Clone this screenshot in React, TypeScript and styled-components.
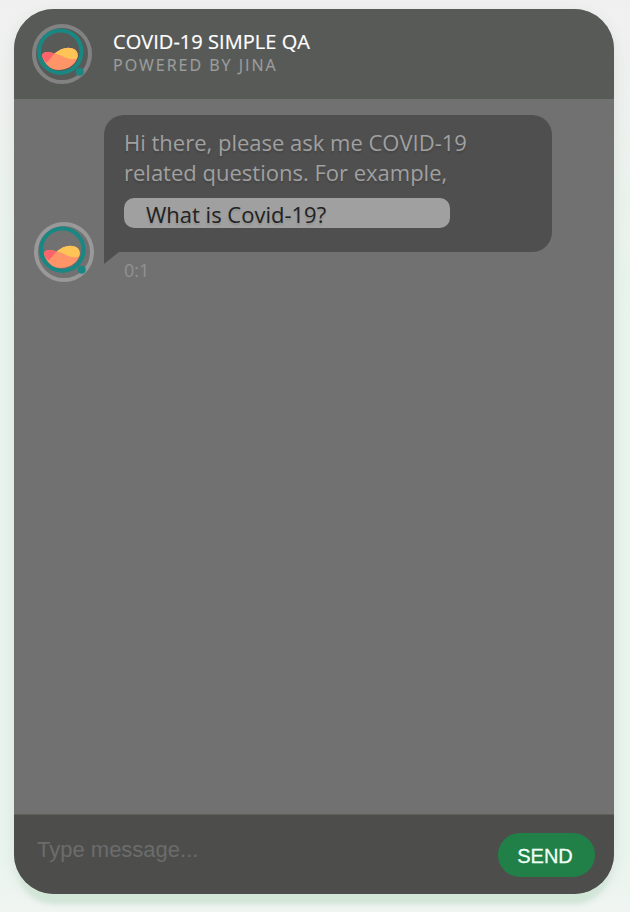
import React from "react";
import styled, { createGlobalStyle } from "styled-components";

const GlobalStyle = createGlobalStyle`
  * { box-sizing: border-box; }
  body {
    margin: 0;
    font-family: "Open Sans", "Noto Sans", sans-serif;
    background: linear-gradient(180deg, #f0f0f0 0, #eef1ef 100px, #e8f4ed 320px, #e8f4ed 840px, #f0f5f2 912px);
    overflow: hidden;
  }
`;

const Page = styled.main`
  width: 630px;
  height: 912px;
  padding: 9px 16px 18px 14px;
  overflow: hidden;
`;

const Chat = styled.section`
  display: flex;
  flex-direction: column;
  width: 600px;
  height: 885px;
  border-radius: 40px;
  overflow: hidden;
  background: #717171;
  box-shadow: 0 14px 4px -4px #d2e6d8, 0 4px 14px rgba(60, 80, 70, 0.1);
`;

const Header = styled.header`
  display: flex;
  flex: 0 0 90px;
  padding: 15px 18px;
  background: #585a58;
`;

const Ring = styled.div<{ $tone: string }>`
  flex: none;
  width: 60px;
  height: 60px;
  border: 4px solid ${(p) => p.$tone};
  border-radius: 50%;
  svg { display: block; }
`;

const Heading = styled.div`
  margin-left: 21px;
  padding-top: 4px;
`;

const Title = styled.h1`
  margin: 0;
  color: #fff;
  font-size: 20px;
  font-weight: 400;
  line-height: 27px;
  letter-spacing: 0.04px;
  white-space: nowrap;
  -webkit-text-stroke: 0.2px currentColor;
`;

const Subtitle = styled.h2`
  margin: 0;
  color: #9c9d9c;
  font-size: 16px;
  font-weight: 400;
  line-height: 20px;
  letter-spacing: 2px;
  white-space: nowrap;
  -webkit-text-stroke: 0.2px currentColor;
`;

const Messages = styled.div`
  display: flex;
  flex: 1;
  align-items: flex-start;
  padding: 16px 20px;
`;

const AvatarSlot = styled.div`
  padding-top: 107px;
`;

const MessageColumn = styled.div`
  margin-left: 10px;
`;

const Bubble = styled.div`
  position: relative;
  width: 448px;
  height: 137px;
  padding: 12px 20px;
  border-radius: 20px 20px 20px 0;
  background: #4f4f4f;
  color: #a0a0a0;
  font-size: 22px;
  line-height: 30px;
  text-shadow: 0 2px 2px rgba(0, 0, 0, 0.15);

  &::after {
    content: "";
    position: absolute;
    left: 0;
    top: 100%;
    border-top: 12px solid #4f4f4f;
    border-right: 15px solid transparent;
  }
`;

const Line = styled.div`
  white-space: nowrap;
`;

const Suggestion = styled.button`
  display: block;
  width: 326px;
  height: 30px;
  margin: 11px 0 0;
  padding: 1px 22px 0;
  border: 0;
  border-radius: 10px;
  background: #a0a0a0;
  color: #222;
  font: inherit;
  font-size: 22px;
  line-height: 30px;
  text-align: left;
  text-shadow: 0 2px 2px rgba(0, 0, 0, 0.12);
`;

const Time = styled.time`
  display: block;
  margin: 6px 0 0 20px;
  color: #929292;
  font-size: 18px;
  line-height: 24px;
`;

const Composer = styled.form`
  display: flex;
  flex: 0 0 80px;
  align-items: flex-start;
  justify-content: space-between;
  padding: 18px 19px 0 23px;
  border-top: 1px solid #5f6056;
  background: #4d4e4c;
`;

const MessageInput = styled.input`
  width: 400px;
  height: 34px;
  padding: 0;
  border: 0;
  outline: 0;
  background: transparent;
  color: #aaa;
  font: 22px "Liberation Sans", Arial, sans-serif;
  &::placeholder { color: #6b6c6b; opacity: 1; }
`;

const SendButton = styled.button`
  width: 97px;
  height: 44px;
  padding: 3px 3px 0 0;
  border: 0;
  border-radius: 22px;
  background: #218047;
  color: #f0fff5;
  font: 20px "Liberation Sans", Arial, sans-serif;
  text-align: center;
  -webkit-text-stroke: 0.3px currentColor;
`;

function BotAvatar({ tone }: { tone: string }) {
  return (
    <Ring $tone={tone}>
      <svg width="52" height="52" viewBox="0 0 52 52" aria-hidden="true">
        <circle cx="24.3" cy="23.7" r="21.2" fill="none" stroke="#1a8783" strokeWidth="4" />
        <circle cx="43.7" cy="43.8" r="4" fill="#1a8783" />
        <path d="M6 28C6 23.500 13 22.800 18.500 25.500C24 21 30 18.500 36 20.200C41 21.500 43 26 41 31C38 38 30 42 23 42C14 42 8.500 36 6 28Z" fill="#ff9468" />
        <path d="M6 28C6 23.500 13 22.800 18.500 25.500C16.500 27.500 14.500 31 10.500 34.500C8.500 32.500 7 30.500 6 28Z" fill="#fc646b" />
        <path d="M18.500 25.500C24 21 30 18.500 36 20.200C41 21.500 43 26 41 30.500C32 33.500 27 26.500 18.500 25.500Z" fill="#ffc456" />
      </svg>
    </Ring>
  );
}

export default function App() {
  return (
    <>
      <GlobalStyle />
      <Page>
        <Chat>
          <Header>
            <BotAvatar tone="#828282" />
            <Heading>
              <Title>COVID-19 SIMPLE QA</Title>
              <Subtitle>POWERED BY JINA</Subtitle>
            </Heading>
          </Header>
          <Messages>
            <AvatarSlot><BotAvatar tone="#999" /></AvatarSlot>
            <MessageColumn>
              <Bubble>
                <Line>Hi there, please ask me COVID-19</Line>
                <Line>related questions. For example,</Line>
                <Suggestion type="button">What is Covid-19?</Suggestion>
              </Bubble>
              <Time>0:1</Time>
            </MessageColumn>
          </Messages>
          <Composer onSubmit={(event) => event.preventDefault()}>
            <MessageInput placeholder="Type message..." aria-label="Message" />
            <SendButton type="submit">SEND</SendButton>
          </Composer>
        </Chat>
      </Page>
    </>
  );
}
